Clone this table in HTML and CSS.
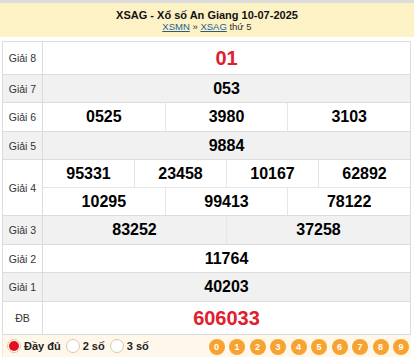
FILE: index.html
```html
<!DOCTYPE html>
<html lang="vi">
<head>
<meta charset="utf-8">
<title>XSAG - Xổ số An Giang 10-07-2025</title>
<link rel="stylesheet" href="styles.css">
</head>
<body>
<div class="topbar"></div>
<div class="header">
  <div class="title">XSAG - Xổ số An Giang 10-07-2025</div>
  <div class="sub"><a href="#">XSMN</a> » <a href="#">XSAG</a> thứ 5</div>
</div>
<div class="table">
  <div class="row h33">
    <div class="label">Giải 8</div>
    <div class="vals"><div class="line"><div class="cell red">01</div></div></div>
  </div>
  <div class="row gray h28">
    <div class="label">Giải 7</div>
    <div class="vals"><div class="line"><div class="cell">053</div></div></div>
  </div>
  <div class="row h29">
    <div class="label">Giải 6</div>
    <div class="vals"><div class="line"><div class="cell">0525</div><div class="cell">3980</div><div class="cell">3103</div></div></div>
  </div>
  <div class="row gray h28">
    <div class="label">Giải 5</div>
    <div class="vals"><div class="line"><div class="cell">9884</div></div></div>
  </div>
  <div class="row h56">
    <div class="label">Giải 4</div>
    <div class="vals">
      <div class="line sep"><div class="cell">95331</div><div class="cell">23458</div><div class="cell">10167</div><div class="cell">62892</div></div>
      <div class="line"><div class="cell">10295</div><div class="cell">99413</div><div class="cell">78122</div></div>
    </div>
  </div>
  <div class="row gray h29">
    <div class="label">Giải 3</div>
    <div class="vals"><div class="line"><div class="cell">83252</div><div class="cell">37258</div></div></div>
  </div>
  <div class="row h28">
    <div class="label">Giải 2</div>
    <div class="vals"><div class="line"><div class="cell">11764</div></div></div>
  </div>
  <div class="row gray h29">
    <div class="label">Giải 1</div>
    <div class="vals"><div class="line"><div class="cell">40203</div></div></div>
  </div>
  <div class="row h33">
    <div class="label">ĐB</div>
    <div class="vals"><div class="line"><div class="cell red">606033</div></div></div>
  </div>
  <div class="bar">
    <div class="opts">
      <span class="radio on"></span><span class="opt">Đầy đủ</span>
      <span class="radio"></span><span class="opt">2 số</span>
      <span class="radio"></span><span class="opt">3 số</span>
    </div>
    <div class="nums">
      <span class="num">0</span><span class="num">1</span><span class="num">2</span><span class="num">3</span><span class="num">4</span><span class="num">5</span><span class="num">6</span><span class="num">7</span><span class="num">8</span><span class="num">9</span>
    </div>
  </div>
</div>
</body>
</html>
```
FILE: styles.css
```css
* { box-sizing: border-box; }
body {
  margin: 0;
  font-family: "Liberation Sans", Arial, sans-serif;
  background: #fff;
  color: #000;
}
.topbar { height: 3px; background: #dcdcdc; }
.header {
  height: 34px;
  background: #fdf2c6;
  text-align: center;
  padding-top: 6px;
}
.title { font-size: 11px; font-weight: bold; line-height: 12px; color: #111; }
.sub { font-size: 9.5px; line-height: 11px; color: #333; }
.sub a { color: #1d5f8e; }
.table {
  margin: 4px 0 0 2px;
  width: 409px;
  border-top: 1px solid #dcdcdc;
}
.row {
  display: flex;
  border-left: 1px solid #dcdcdc;
  border-right: 1px solid #dcdcdc;
  border-bottom: 1px solid #dcdcdc;
  background: #fff;
}
.row.gray { background: #f1f1f1; }
.h28 { height: 28px; }
.h29 { height: 29px; }
.h33 { height: 33px; }
.h56 { height: 56px; }
.label {
  width: 40px;
  flex: none;
  border-right: 1px solid #dcdcdc;
  display: flex;
  align-items: center;
  justify-content: center;
  font-size: 10.5px;
  color: #333;
}
.vals { flex: 1; display: flex; flex-direction: column; }
.line { flex: 1; display: flex; }
.line.sep { border-bottom: 1px solid #e6e6e6; }
.cell {
  flex: 1;
  display: flex;
  align-items: center;
  justify-content: center;
  font-size: 16px;
  font-weight: bold;
  border-left: 1px solid #e6e6e6;
}
.cell:first-child { border-left: none; }
.cell.red { color: #e0202e; font-size: 20px; }
.bar {
  height: 22px;
  display: flex;
  align-items: center;
  justify-content: space-between;
  background: #fff8ea;
  border-left: 1px solid #f6e8cc;
  padding: 0 2px 0 4px;
}
.opts { display: flex; align-items: center; }
.radio {
  width: 14px;
  height: 14px;
  border-radius: 50%;
  border: 1px solid #d8c9ad;
  background: #fff;
  margin-right: 3px;
  display: flex;
  align-items: center;
  justify-content: center;
}
.radio.on::after {
  content: "";
  width: 10px;
  height: 10px;
  border-radius: 50%;
  background: #e3101e;
}
.opt { font-size: 11px; font-weight: bold; color: #222; margin-right: 5px; }
.nums { display: flex; gap: 4.5px; padding-top: 2px; }
.num {
  width: 16px;
  height: 16px;
  border-radius: 50%;
  background: #f6a331;
  color: #fff;
  font-size: 9px;
  font-weight: bold;
  display: flex;
  align-items: center;
  justify-content: center;
}
```
